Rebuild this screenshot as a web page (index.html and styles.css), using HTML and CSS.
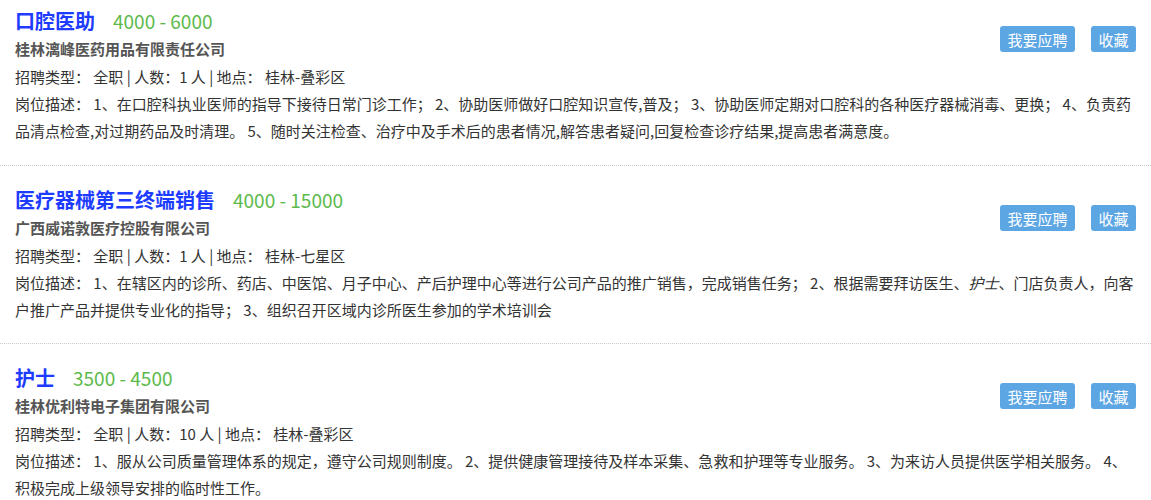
FILE: index.html
```html
<!DOCTYPE html>
<html lang="zh-CN">
<head>
    <meta charset="UTF-8">
    <title>招聘信息</title>
    <link rel="stylesheet" href="styles.css">
</head>
<body>
    <div class="job-list">
        <div class="job">
            <div class="job-head">
                <div>
                    <div class="job-title"><a href="#">口腔医助</a><span class="salary">4000 - 6000</span></div>
                    <div class="company">桂林漓峰医药用品有限责任公司</div>
                </div>
                <div class="actions">
                    <button class="btn">我要应聘</button>
                    <button class="btn">收藏</button>
                </div>
            </div>
            <p class="info">招聘类型： 全职 | 人数：1 人 | 地点： 桂林-叠彩区</p>
            <p class="desc">岗位描述： 1、在口腔科执业医师的指导下接待日常门诊工作； 2、协助医师做好口腔知识宣传,普及； 3、协助医师定期对口腔科的各种医疗器械消毒、更换； 4、负责药品清点检查,对过期药品及时清理。 5、随时关注检查、治疗中及手术后的患者情况,解答患者疑问,回复检查诊疗结果,提高患者满意度。</p>
        </div>
        <div class="job">
            <div class="job-head">
                <div>
                    <div class="job-title"><a href="#">医疗器械第三终端销售</a><span class="salary">4000 - 15000</span></div>
                    <div class="company">广西威诺敦医疗控股有限公司</div>
                </div>
                <div class="actions">
                    <button class="btn">我要应聘</button>
                    <button class="btn">收藏</button>
                </div>
            </div>
            <p class="info">招聘类型： 全职 | 人数：1 人 | 地点： 桂林-七星区</p>
            <p class="desc">岗位描述： 1、在辖区内的诊所、药店、中医馆、月子中心、产后护理中心等进行公司产品的推广销售，完成销售任务； 2、根据需要拜访医生、<i>护士</i>、门店负责人，向客户推广产品并提供专业化的指导； 3、组织召开区域内诊所医生参加的学术培训会</p>
        </div>
        <div class="job">
            <div class="job-head">
                <div>
                    <div class="job-title"><a href="#">护士</a><span class="salary">3500 - 4500</span></div>
                    <div class="company">桂林优利特电子集团有限公司</div>
                </div>
                <div class="actions">
                    <button class="btn">我要应聘</button>
                    <button class="btn">收藏</button>
                </div>
            </div>
            <p class="info">招聘类型： 全职 | 人数：10 人 | 地点： 桂林-叠彩区</p>
            <p class="desc">岗位描述： 1、服从公司质量管理体系的规定，遵守公司规则制度。 2、提供健康管理接待及样本采集、急救和护理等专业服务。 3、为来访人员提供医学相关服务。 4、积极完成上级领导安排的临时性工作。</p>
        </div>
    </div>
</body>
</html>
```

FILE: styles.css
```css
body {
    margin: 0;
    font-family: "Noto Sans CJK SC", "Noto Sans", sans-serif;
    font-size: 15px;
    color: #333;
    background: #fff;
}
.job {
    padding: 20px 15px 20px;
    border-bottom: 1px dotted #c8c8c8;
}
.job:first-child {
    padding-top: 7px;
    padding-bottom: 21px;
}
.job-head {
    display: flex;
    justify-content: space-between;
    align-items: flex-start;
}
.job-title {
    line-height: 28px;
    height: 28px;
}
.job-title a {
    font-size: 20px;
    font-weight: bold;
    color: #1d3cff;
    text-decoration: none;
}
.salary {
    font-size: 19px;
    color: #5cba4c;
    margin-left: 18px;
}
.company {
    font-weight: bold;
    color: #555;
    line-height: 28px;
}
.actions {
    display: flex;
    gap: 16px;
    margin-top: 19px;
}
.btn {
    background-color: #5da6e4;
    color: #fff;
    border: none;
    border-radius: 3px;
    height: 26px;
    padding: 0 7.5px;
    font-family: inherit;
    font-size: 15px;
    cursor: pointer;
}
.info, .desc {
    margin: 0;
    line-height: 27px;
}
.desc i {
    font-style: italic;
}
```
